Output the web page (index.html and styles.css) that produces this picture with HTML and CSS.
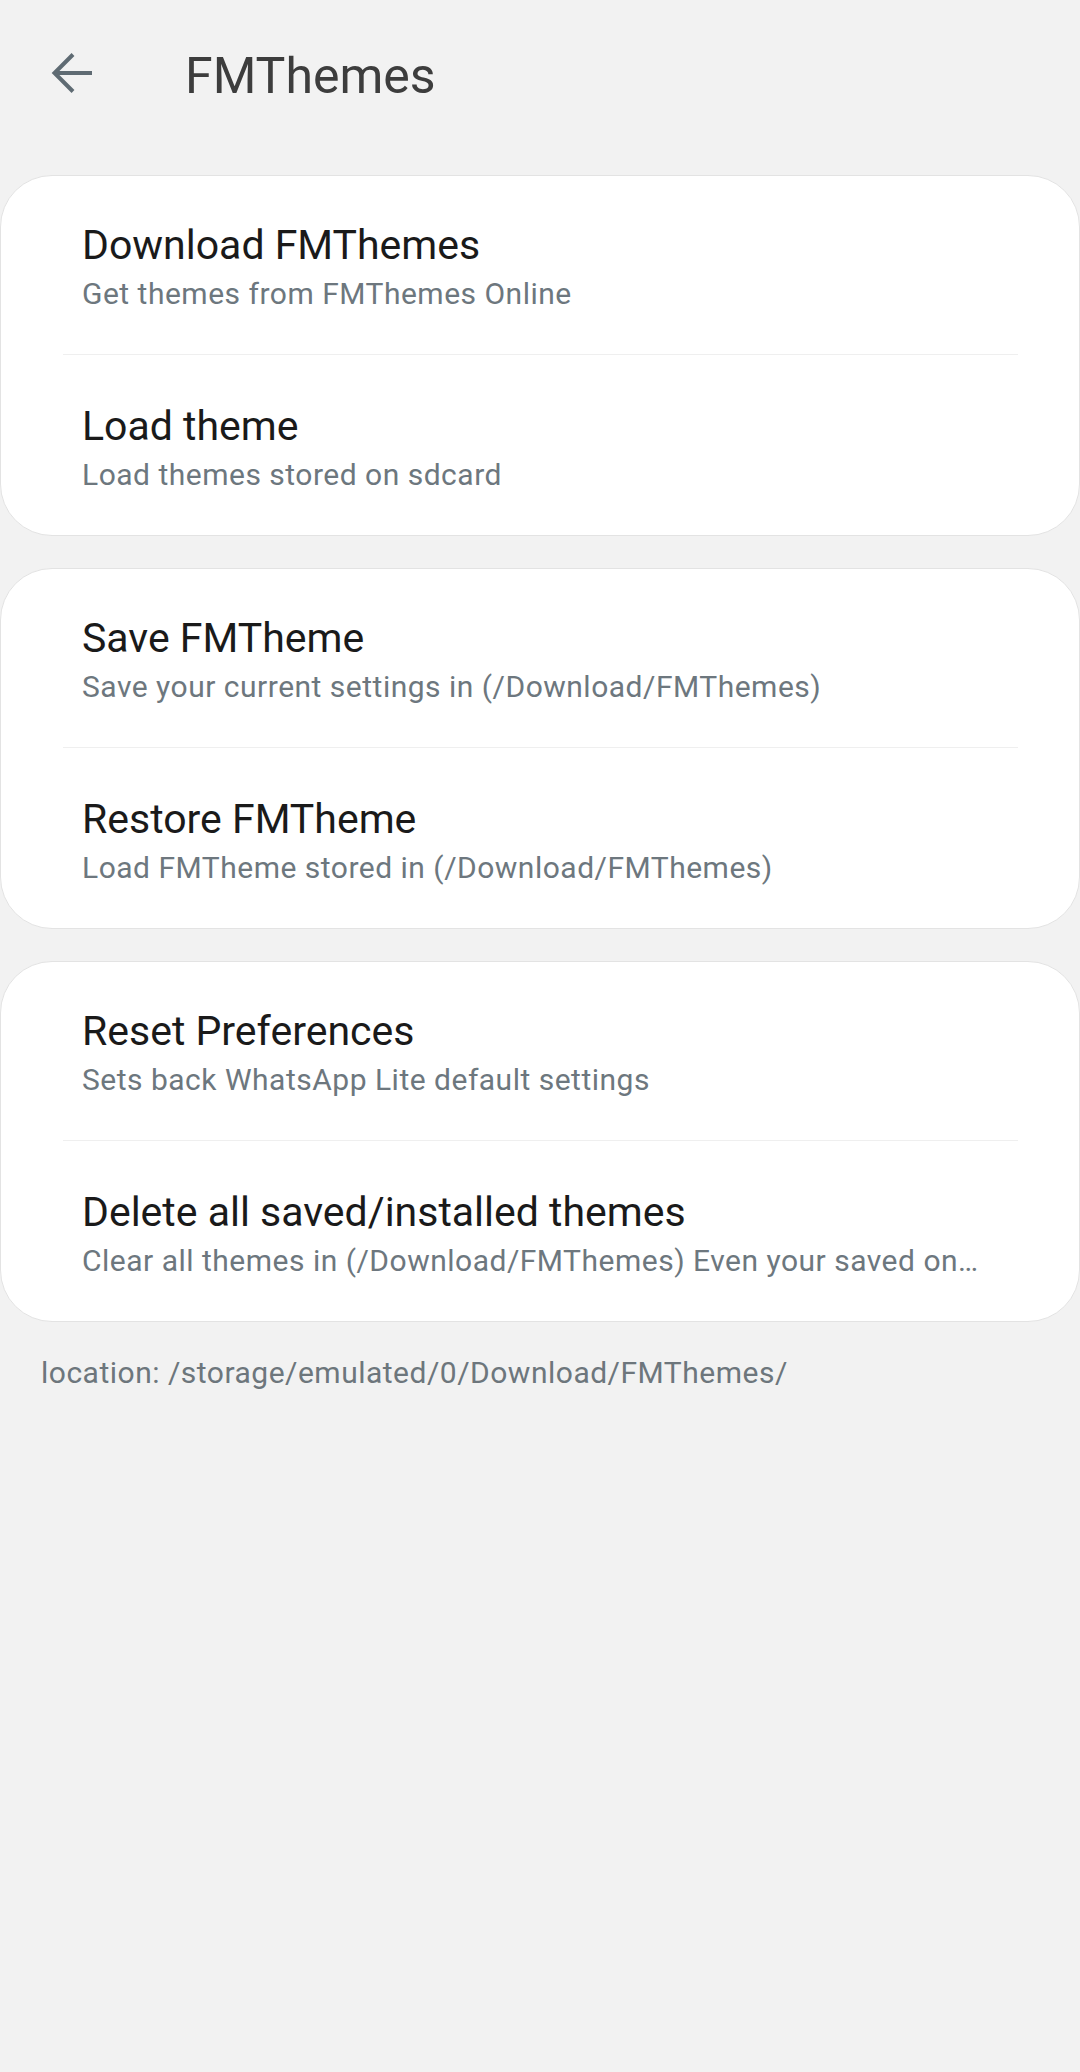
FILE: index.html
```html
<!DOCTYPE html>
<html lang="en">
<head>
    <meta charset="UTF-8">
    <meta name="viewport" content="width=device-width, initial-scale=1.0">
    <title>FMThemes</title>
    <link rel="stylesheet" href="styles.css">
</head>
<body>

<div class="header">
    <button class="back" aria-label="Back">
        <svg width="42" height="42" viewBox="0 0 42 42">
            <path d="M41 21 H4 M22 2.5 L3.5 21 L22 39.5" fill="none" stroke="#5f6b73" stroke-width="4"/>
        </svg>
    </button>
    <h1 class="title">FMThemes</h1>
</div>

<div class="content">
    <div class="card">
        <div class="row">
            <div class="row-title">Download FMThemes</div>
            <div class="row-sub">Get themes from FMThemes Online</div>
        </div>
        <div class="row">
            <div class="row-title">Load theme</div>
            <div class="row-sub">Load themes stored on sdcard</div>
        </div>
    </div>

    <div class="card">
        <div class="row">
            <div class="row-title">Save FMTheme</div>
            <div class="row-sub">Save your current settings in (/Download/FMThemes)</div>
        </div>
        <div class="row">
            <div class="row-title">Restore FMTheme</div>
            <div class="row-sub">Load FMTheme stored in (/Download/FMThemes)</div>
        </div>
    </div>

    <div class="card">
        <div class="row">
            <div class="row-title">Reset Preferences</div>
            <div class="row-sub">Sets back WhatsApp Lite default settings</div>
        </div>
        <div class="row">
            <div class="row-title">Delete all saved/installed themes</div>
            <div class="row-sub">Clear all themes in (/Download/FMThemes) Even your saved on…</div>
        </div>
    </div>

    <p class="location">location: /storage/emulated/0/Download/FMThemes/</p>
</div>

</body>
</html>
```

FILE: styles.css
```css
body {
    font-family: Roboto, 'Noto Sans', sans-serif;
    margin: 0;
    background-color: #f2f2f2;
    min-height: 2072px;
}
.header {
    display: flex;
    align-items: center;
    height: 146px;
}
.back {
    display: flex;
    padding: 0;
    margin-left: 51px;
    border: none;
    background: none;
    cursor: pointer;
}
.title {
    margin: 6px 0 0 92px;
    font-size: 50px;
    font-weight: 400;
    line-height: 50px;
    color: #3d3d3d;
}
.content {
    padding-top: 29px;
}
.card {
    background-color: #fff;
    border: 1px solid #e3e3e3;
    border-radius: 52px;
    margin-bottom: 32px;
}
.row {
    margin: 0 61px 0 62px;
    padding: 45px 21px 41px 19px;
}
.row + .row {
    border-top: 1px solid #efefef;
    padding-top: 47px;
}
.row-title {
    font-size: 41px;
    line-height: 48px;
    color: #1a1a1a;
    white-space: nowrap;
}
.row-sub {
    margin-top: 6px;
    font-size: 30px;
    line-height: 38px;
    letter-spacing: 0.5px;
    color: #6d777e;
    white-space: nowrap;
    overflow: hidden;
    text-overflow: ellipsis;
}
.location {
    margin: 11px 0 0 41px;
    font-size: 30px;
    line-height: 38px;
    letter-spacing: 0.5px;
    color: #6d767c;
}
```
